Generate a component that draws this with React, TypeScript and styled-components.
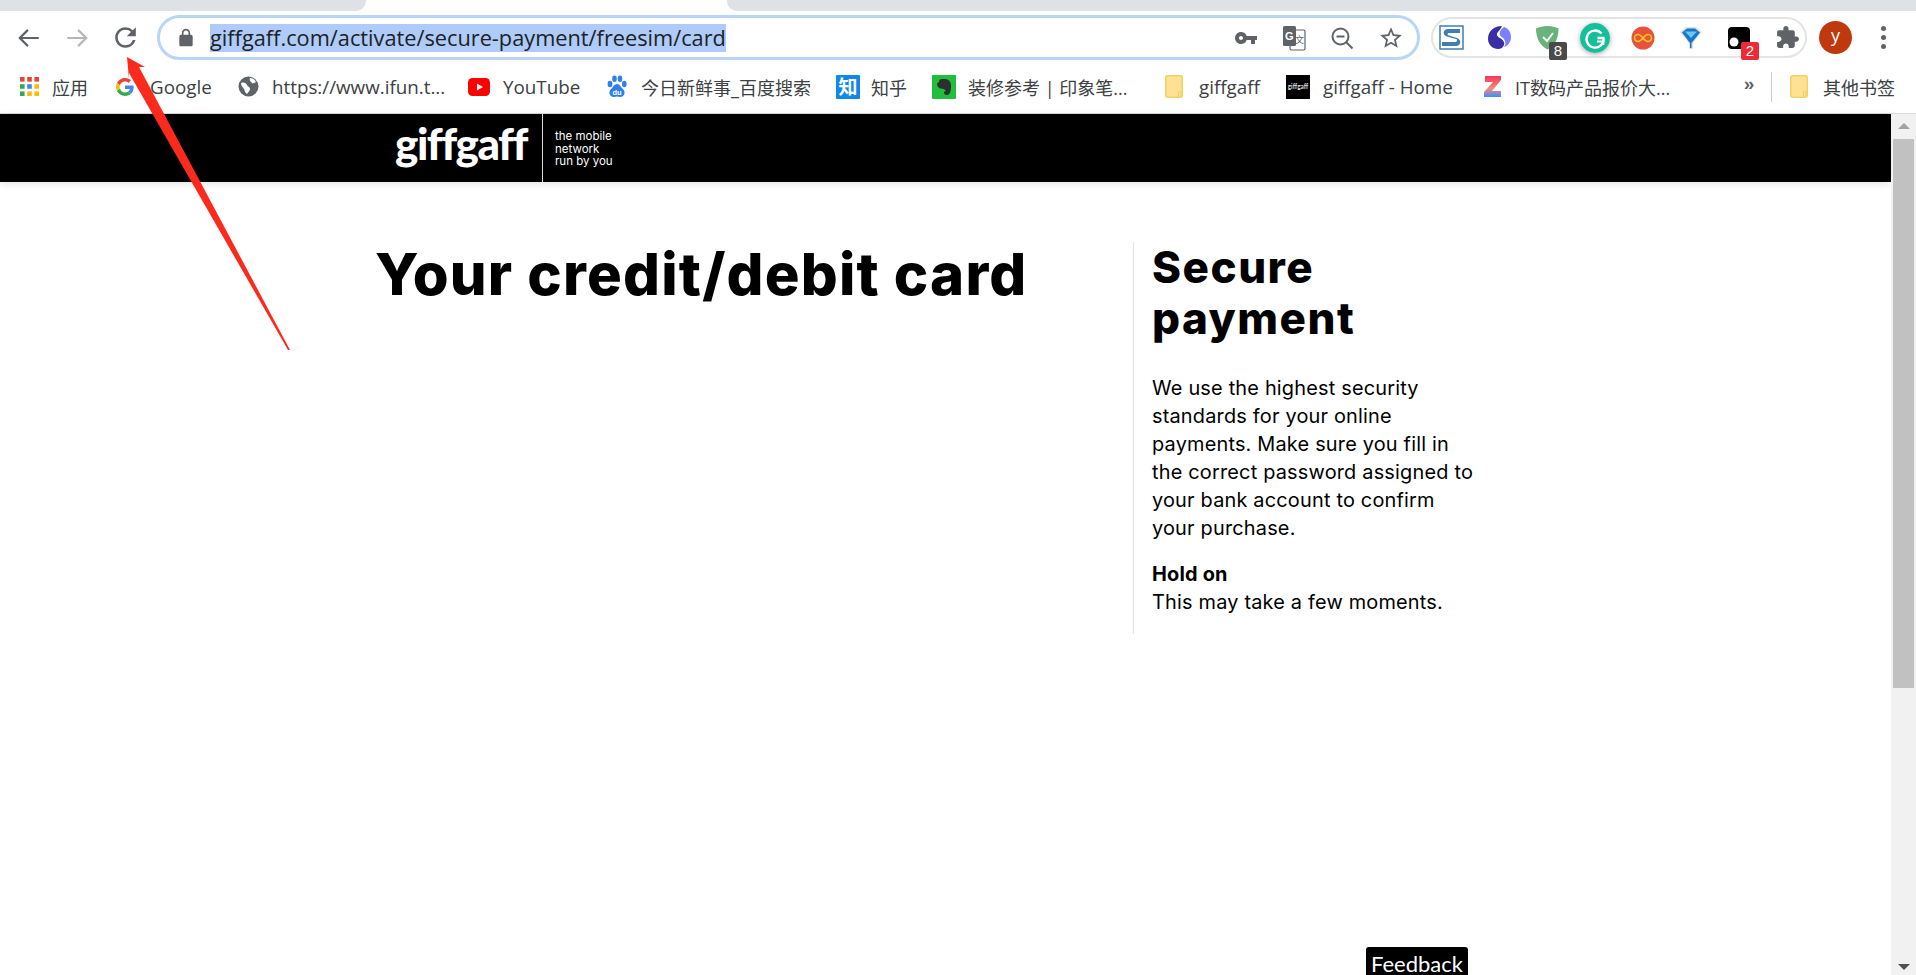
import React from 'react';
import styled, { createGlobalStyle } from 'styled-components';

const GlobalStyle = createGlobalStyle`
  html, body {
    margin: 0;
    padding: 0;
    background: #fff;
    overflow: hidden;
  }
  * {
    box-sizing: border-box;
  }
`;

const uiFont = `'Open Sans', 'Noto Sans CJK SC', sans-serif`;
const pageFont = `Inter, 'Noto Sans', sans-serif`;

const Root = styled.div`
  position: relative;
  width: 1916px;
  height: 975px;
  overflow: hidden;
  display: flex;
  flex-direction: column;
  background: #fff;
`;

const TabStrip = styled.div`
  height: 11px;
  display: flex;
  flex-shrink: 0;
`;
const InactiveTab = styled.div<{ $side: 'left' | 'right' }>`
  background: #dee1e6;
  height: 100%;
  flex: ${(p) => (p.$side === 'left' ? '0 0 366px' : '1')};
  margin-left: ${(p) => (p.$side === 'right' ? '361px' : '0')};
  border-radius: ${(p) => (p.$side === 'left' ? '0 0 10px 0' : '0 0 0 10px')};
`;

const Toolbar = styled.div`
  display: flex;
  align-items: center;
  height: 49px;
  padding: 4px 0 0 5px;
  flex-shrink: 0;
`;
const NavButton = styled.div`
  width: 48px;
  display: flex;
  justify-content: center;
  align-items: center;
`;
const UrlBar = styled.div`
  width: 1263px;
  height: 45px;
  margin-left: 8px;
  border: 3px solid #b9d5f7;
  border-radius: 23px;
  display: flex;
  align-items: center;
  padding: 0 13px 0 16px;
`;
const UrlText = styled.span`
  font-family: ${uiFont};
  font-size: 21.75px;
  line-height: 28px;
  color: #202124;
  background: #aecbfa;
  margin-left: 14px;
  margin-right: auto;
  white-space: nowrap;
`;
const UrlActions = styled.div`
  display: flex;
  align-items: center;
  gap: 24px;
`;
const ExtensionPill = styled.div`
  width: 376px;
  height: 41px;
  margin-left: 11px;
  border: 2px solid #e3e4e6;
  border-radius: 21px;
  display: flex;
  align-items: center;
  gap: 18px;
  padding-left: 3px;
`;
const ExtensionSlot = styled.div<{ $raised?: boolean }>`
  position: relative;
  width: 30px;
  height: 30px;
  display: flex;
  align-items: center;
  justify-content: center;
  border-radius: 50%;
  ${(p) => p.$raised && 'background: #fff; box-shadow: 0 1px 5px rgba(0,0,0,.35);'}
`;
const Badge = styled.span<{ $color: string }>`
  position: absolute;
  right: -5px;
  bottom: -7px;
  width: 18px;
  height: 18px;
  border-radius: 2px;
  background: ${(p) => p.$color};
  color: #fff;
  font: 15px/18px 'Liberation Sans', sans-serif;
  text-align: center;
`;
const Avatar = styled.div`
  width: 33px;
  height: 33px;
  margin-left: 12px;
  border-radius: 50%;
  background: #c0390e;
  color: #fff;
  font: 18px/29px ${uiFont};
  text-align: center;
`;
const MenuDots = styled.div`
  margin-left: 29px;
  display: flex;
  flex-direction: column;
  gap: 4px;
  span {
    width: 5px;
    height: 5px;
    border-radius: 50%;
    background: #5f6368;
  }
`;

const BookmarkBar = styled.div`
  height: 54px;
  display: flex;
  align-items: center;
  padding-left: 20px;
  border-bottom: 1px solid #dadce0;
  flex-shrink: 0;
`;
const Bookmark = styled.div<{ $width: number; $slot: number; $cjk?: boolean }>`
  width: ${(p) => p.$width}px;
  display: grid;
  grid-template-columns: ${(p) => p.$slot}px 1fr;
  align-items: center;
  flex-shrink: 0;
  span {
    font-family: ${uiFont};
    font-size: ${(p) => (p.$cjk ? '18px' : '18.8px')};
    color: #3c4043;
    white-space: nowrap;
  }
`;
const Chevrons = styled.span`
  font: bold 19px 'Liberation Sans', sans-serif;
  color: #5f6368;
  width: 20px;
  text-align: center;
  position: relative;
  top: -3px;
`;
const BarDivider = styled.div`
  width: 1px;
  height: 30px;
  background: #ccc;
  margin: 0 18px 0 12px;
`;

const Viewport = styled.div`
  flex: 1;
  display: flex;
  min-height: 0;
`;
const PageArea = styled.div`
  flex: 1;
  min-width: 0;
`;
const SiteHeader = styled.header`
  height: 68px;
  background: #000;
  color: #fff;
  display: flex;
  padding-left: 395px;
  box-shadow: 0 2px 8px rgba(0, 0, 0, 0.12);
`;
const Logo = styled.div`
  width: 147px;
  font-family: Lato, sans-serif;
  font-weight: 900;
  font-size: 44px;
  letter-spacing: -1.5px;
  line-height: 58px;
`;
const Tagline = styled.div`
  border-left: 1px solid #ddd;
  padding: 16px 0 0 12px;
  font-family: ${pageFont};
  font-size: 11.5px;
  line-height: 12.5px;
`;
const Content = styled.main`
  display: flex;
  padding: 60px 0 0 375px;
`;
const MainColumn = styled.section`
  width: 758px;
`;
const Title = styled.h1`
  margin: 0;
  font-family: ${pageFont};
  font-weight: 800;
  font-size: 58px;
  line-height: 64px;
  letter-spacing: 1.2px;
  color: #000;
`;
const Sidebar = styled.aside`
  width: 360px;
  height: 392px;
  border-left: 1px solid #e2e2e2;
  padding-left: 18px;
  font-family: ${pageFont};
  color: #000;
`;
const SidebarTitle = styled.h2`
  margin: 0 0 30px;
  font-weight: 800;
  font-size: 44px;
  line-height: 51px;
  letter-spacing: 1.5px;
`;
const SidebarText = styled.p`
  margin: 0 0 18px;
  font-size: 19.9px;
  line-height: 28px;
  letter-spacing: 0.2px;
  white-space: nowrap;
`;
const Strong = styled.strong`
  display: block;
  font-weight: 700;
`;

const Scrollbar = styled.div`
  width: 25px;
  background: #f1f1f1;
  display: flex;
  flex-direction: column;
  align-items: center;
  padding-top: 9px;
`;
const ScrollArrow = styled.div<{ $down?: boolean }>`
  width: 0;
  height: 0;
  border-left: 6px solid transparent;
  border-right: 6px solid transparent;
  ${(p) => (p.$down ? 'border-top: 6px solid #505050;' : 'border-bottom: 6px solid #a3a3a3;')}
`;
const ScrollThumb = styled.div`
  width: 21px;
  height: 549px;
  margin: 10px 0 auto;
  background: #c1c1c1;
`;
const ScrollEnd = styled.div`
  height: 5px;
`;

const Feedback = styled.div`
  position: absolute;
  left: 1366px;
  bottom: 0;
  width: 102px;
  height: 28px;
  background: #000;
  color: #fff;
  border-radius: 3px 3px 0 0;
  font: 22px/34px Lato, sans-serif;
  text-align: center;
`;
const Annotation = styled.svg`
  position: absolute;
  left: 0;
  top: 0;
  pointer-events: none;
`;

const grey = '#5f6368';

const Icon: React.FC<{ size?: number; d: string; color?: string }> = ({ size = 24, d, color = grey }) => (
  <svg width={size} height={size} viewBox="0 0 24 24" fill={color}>
    <path d={d} />
  </svg>
);

const Arrow: React.FC<{ flip?: boolean; color: string }> = ({ flip, color }) => (
  <svg width="26" height="26" viewBox="0 0 24 24" fill="none" stroke={color} strokeWidth="2">
    <path d={flip ? 'M3 12h17M13 4.5l7.5 7.5-7.5 7.5' : 'M21 12H4M11 4.5 3.5 12l7.5 7.5'} />
  </svg>
);

const reloadPath =
  'M17.65 6.35A7.958 7.958 0 0 0 12 4c-4.42 0-7.99 3.58-7.99 8s3.57 8 7.99 8c3.73 0 6.84-2.55 7.73-6h-2.08A5.99 5.99 0 0 1 12 18c-3.31 0-6-2.69-6-6s2.69-6 6-6c1.66 0 3.14.69 4.22 1.78L13 11h7V4l-2.35 2.35z';
const lockPath =
  'M18 8h-1V6c0-2.76-2.24-5-5-5S7 3.24 7 6v2H6c-1.1 0-2 .9-2 2v10c0 1.1.9 2 2 2h12c1.1 0 2-.9 2-2V10c0-1.1-.9-2-2-2zM9 8V6c0-1.66 1.34-3 3-3s3 1.34 3 3v2H9z';
const keyPath =
  'M12.65 10A5.99 5.99 0 0 0 7 6c-3.31 0-6 2.69-6 6s2.69 6 6 6a5.99 5.99 0 0 0 5.65-4H17v4h4v-4h2v-4H12.65zM7 14c-1.1 0-2-.9-2-2s.9-2 2-2 2 .9 2 2-.9 2-2 2z';
const starPath =
  'M22 9.24l-7.19-.62L12 2 9.19 8.63 2 9.24l5.46 4.73L5.82 21 12 17.27 18.18 21l-1.63-7.03L22 9.24zM12 15.4l-3.76 2.27 1-4.28-3.32-2.88 4.38-.38L12 6.1l1.71 4.04 4.38.38-3.32 2.88 1 4.28L12 15.4z';
const puzzlePath =
  'M20.5 11H19V7c0-1.1-.9-2-2-2h-4V3.5C13 2.12 11.88 1 10.5 1S8 2.12 8 3.5V5H4c-1.1 0-1.99.9-1.99 2v3.8H3.5c1.49 0 2.7 1.21 2.7 2.7s-1.21 2.7-2.7 2.7H2V20c0 1.1.9 2 2 2h3.8v-1.5c0-1.49 1.21-2.7 2.7-2.7 1.49 0 2.7 1.21 2.7 2.7V22H17c1.1 0 2-.9 2-2v-4h1.5c1.38 0 2.5-1.12 2.5-2.5S21.88 11 20.5 11z';

const TranslateIcon = () => (
  <svg width="24" height="26" viewBox="0 0 24 26">
    <rect x="8" y="5" width="15" height="20" rx="1.5" fill="#fff" stroke={grey} strokeWidth="1.2" />
    <rect x="1" y="1" width="13" height="20" rx="1.5" fill={grey} />
    <text x="3" y="15" fontFamily="Liberation Sans" fontWeight="700" fontSize="11" fill="#fff">G</text>
    <text x="13" y="18" fontFamily="Noto Sans CJK SC" fontSize="9" fill={grey}>文</text>
  </svg>
);
const ZoomOutIcon = () => (
  <svg width="24" height="24" viewBox="0 0 24 24" fill="none" stroke={grey} strokeWidth="2">
    <circle cx="10.5" cy="10.5" r="8" />
    <path d="M6.5 10.5h8M16.5 16.5l6 6" />
  </svg>
);
const StripeS = () => (
  <svg width="25" height="25" viewBox="0 0 25 25">
    <rect x="1" y="1" width="23" height="23" fill="#fff" stroke="#3e7eb5" strokeWidth="1.5" />
    <path d="M21 4H9C4 4 3 10 8 11.5L17 14c2 .7 1 3-1 3H3v4h14c5 0 6-6 1-8L10 10.5C8 10 8.500 8 10 8h11z" fill="#3e7eb5" />
  </svg>
);
const SwirlIcon = () => (
  <svg width="25" height="25" viewBox="0 0 25 25">
    <path d="M15 1C8 1 1 5 1 14c0 6 5 10 10 10 3 0 5-1.500 6-4 1-3-1-5-4-7-3-1.500-4-4-2-6 1-1.500 2.500-2.500 4-6z" fill="#3a2ea5" />
    <path d="M17 2c4 1 7 5 7 10 0 5-3 9-7 10 2-3 2-6-1-9-3-2-4-4-3-6 .5-2 2-3.500 4-5z" fill="#7a80ff" />
  </svg>
);
const ShieldIcon = () => (
  <svg width="25" height="25" viewBox="0 0 25 25">
    <path d="M12.500 1c4 0 8 1 11 2.500 0 9-3 17-11 21C4.500 20.500 1 12.500 1 3.500 4 2 8.500 1 12.500 1z" fill="#68b27b" />
    <path d="M8 12l4 4 6-8" fill="none" stroke="#fff" strokeWidth="2" />
  </svg>
);
const GrammarlyIcon = () => (
  <svg width="30" height="30" viewBox="0 0 30 30">
    <circle cx="15" cy="15" r="15" fill="#15bf99" />
    <path d="M21.500 10.500A8.500 8.500 0 1 0 23.500 15h-6" fill="none" stroke="#fff" strokeWidth="2.400" />
    <path d="M17 18.500h6.500V22" fill="none" stroke="#fff" strokeWidth="1.800" />
  </svg>
);
const InfinityIcon = () => (
  <svg width="24" height="24" viewBox="0 0 24 24">
    <circle cx="12" cy="12" r="11.500" fill="#e8523c" />
    <path d="M12 12c-2-2.500-3-3.500-5-3.500a3.500 3.500 0 0 0 0 7c2 0 3-1 5-3.500s3-3.500 5-3.500a3.500 3.500 0 0 1 0 7c-2 0-3-1-5-3.500z" fill="none" stroke="#f6c21c" strokeWidth="1.700" />
  </svg>
);
const FunnelIcon = () => (
  <svg width="24" height="24" viewBox="0 0 24 24">
    <path d="M1 6 7 1h10l6 5-9 11v6h-4v-6z" fill="#dcdfe3" />
    <path d="M3 6.500 8 2.500h8l5 4-8.500 10.500v5h-1.500v-5z" fill="#1878c8" />
    <path d="M6 5.500h12L12 12z" fill="#6fc5f5" />
  </svg>
);
const BlackBlockIcon = () => (
  <svg width="24" height="24" viewBox="0 0 24 24">
    <rect x="1" y="1" width="22" height="22" rx="4" fill="#000" />
    <circle cx="7" cy="16" r="4.500" fill="#fff" />
  </svg>
);

const AppsGridIcon = () => {
  const colors = ['#ea4335', '#ea4335', '#ea4335', '#34a853', '#4285f4', '#fbbc05', '#34a853', '#fbbc05', '#fbbc05'];
  return (
    <svg width="19" height="19" viewBox="0 0 19 19">
      {colors.map((fill, i) => (
        <rect key={i} x={(i % 3) * 7.2} y={Math.floor(i / 3) * 7.2} width="4.600" height="4.600" fill={fill} />
      ))}
    </svg>
  );
};
const GoogleIcon = () => (
  <svg width="18" height="18" viewBox="0 0 48 48">
    <path fill="#EA4335" d="M24 9.500c3.540 0 6.710 1.220 9.210 3.600l6.850-6.850C35.900 2.380 30.470 0 24 0 14.620 0 6.510 5.380 2.560 13.220l7.980 6.190C12.430 13.720 17.740 9.500 24 9.500z" />
    <path fill="#4285F4" d="M46.980 24.550c0-1.570-.15-3.090-.38-4.550H24v9.020h12.940c-.58 2.960-2.260 5.480-4.780 7.180l7.730 6c4.510-4.180 7.090-10.360 7.090-17.650z" />
    <path fill="#FBBC05" d="M10.530 28.590c-.48-1.450-.76-2.990-.76-4.590s.27-3.140.76-4.590l-7.980-6.190C.92 16.460 0 20.120 0 24c0 3.880.92 7.540 2.560 10.780l7.970-6.190z" />
    <path fill="#34A853" d="M24 48c6.480 0 11.930-2.130 15.890-5.810l-7.730-6c-2.150 1.450-4.920 2.300-8.160 2.300-6.260 0-11.570-4.220-13.470-9.910l-7.980 6.190C6.510 42.620 14.620 48 24 48z" />
  </svg>
);
const GlobeIcon = () => (
  <svg width="21" height="21" viewBox="0 0 21 21">
    <circle cx="10.500" cy="10.500" r="10" fill={grey} />
    <path d="M3 7c3-1 5 0 6 2 1 2 3 2 3 4s-2 3-3 5c-2-1-2-3-3-5S3 10 3 7zM12 2c3 0 5 2 6 4-2 1-3 2-4 1s-3-3-2-5z" fill="#fff" />
  </svg>
);
const YouTubeIcon = () => (
  <svg width="22" height="18" viewBox="0 0 22 18">
    <rect width="22" height="18" rx="4.500" fill="#f00" />
    <path d="M9 5.500v7l6-3.500z" fill="#fff" />
  </svg>
);
const BaiduIcon = () => (
  <svg width="20" height="24" viewBox="0 0 20 24">
    <g fill="#2f80ed">
      <ellipse cx="3" cy="9" rx="2.400" ry="3.200" />
      <ellipse cx="7.500" cy="3.800" rx="2.300" ry="3.300" />
      <ellipse cx="13" cy="3.800" rx="2.300" ry="3.300" />
      <ellipse cx="17.300" cy="9" rx="2.300" ry="3.200" />
      <path d="M10 9c3 0 3.500 3 6 5 3 3 1.500 8-3 8-1 0-2-.5-3-.5s-2 .5-3 .5c-4.500 0-6-5-3-8 2.500-2 3-5 6-5z" />
    </g>
    <text x="5.500" y="20" fontFamily="Liberation Sans" fontWeight="700" fontSize="7.500" fill="#fff">du</text>
  </svg>
);
const ZhihuIcon = () => (
  <svg width="24" height="24" viewBox="0 0 24 24">
    <rect width="24" height="24" rx="1" fill="#0f88eb" />
    <text x="12" y="18.500" textAnchor="middle" fontFamily="Noto Sans CJK SC" fontWeight="700" fontSize="19" fill="#fff">知</text>
  </svg>
);
const EvernoteIcon = () => (
  <svg width="24" height="24" viewBox="0 0 24 24">
    <rect width="24" height="24" rx="1" fill="#1fbf3c" />
    <path d="M7 7c0-2 1-3 3-3h3c4 0 6 3 6 7 0 5-1 9-4 9-2 0-3-1-3-2.500 0-1 1-1.500 2-1-1-3-4-3-6-3-2-1-3-3-3-5l2-1.500z" fill="#2b2f2d" />
  </svg>
);
const FolderIcon = () => (
  <svg width="18" height="23" viewBox="0 0 18 23">
    <rect x="0.750" y="0.750" width="16.500" height="21.500" rx="2" fill="#fde293" stroke="#f5d061" strokeWidth="1.500" />
    <path d="M13.500 22v-4.500a1.200 1.200 0 0 1 2.500 0V22" fill="none" stroke="#f5d061" strokeWidth="1" />
  </svg>
);
const GiffgaffTile = () => (
  <svg width="24" height="24" viewBox="0 0 24 24">
    <rect width="24" height="24" fill="#000" />
    <text x="12" y="14" textAnchor="middle" fontFamily="Lato" fontWeight="700" fontSize="6.500" fill="#ddd">giffgaff</text>
  </svg>
);
const ZolIcon = () => (
  <svg width="18" height="23" viewBox="0 0 18 23">
    <defs>
      <linearGradient id="zol" x1="0" y1="0" x2="0" y2="1">
        <stop offset="0" stopColor="#f5365c" />
        <stop offset="0.600" stopColor="#f58a7a" />
        <stop offset="1" stopColor="#3f8cff" />
      </linearGradient>
    </defs>
    <path d="M1 1h16v4L8 16h9v6H0v-5L9 7H1z" fill="url(#zol)" />
  </svg>
);

type BookmarkItem = {
  label: string;
  icon: React.ReactNode;
  width: number;
  slot: number;
  cjk?: boolean;
};

const bookmarks: BookmarkItem[] = [
  { label: '应用', icon: <AppsGridIcon />, width: 96, slot: 32, cjk: true },
  { label: 'Google', icon: <GoogleIcon />, width: 122, slot: 34 },
  { label: 'https://www.ifun.t...', icon: <GlobeIcon />, width: 230, slot: 34 },
  { label: 'YouTube', icon: <YouTubeIcon />, width: 139, slot: 35 },
  { label: '今日新鲜事_百度搜索', icon: <BaiduIcon />, width: 229, slot: 34, cjk: true },
  { label: '知乎', icon: <ZhihuIcon />, width: 96, slot: 35, cjk: true },
  { label: '装修参考 | 印象笔...', icon: <EvernoteIcon />, width: 233, slot: 36, cjk: true },
  { label: 'giffgaff', icon: <FolderIcon />, width: 121, slot: 34 },
  { label: 'giffgaff - Home', icon: <GiffgaffTile />, width: 198, slot: 37 },
  { label: 'IT数码产品报价大...', icon: <ZolIcon />, width: 255, slot: 31, cjk: true },
];

const App: React.FC = () => (
  <Root>
    <GlobalStyle />
    <TabStrip>
      <InactiveTab $side="left" />
      <InactiveTab $side="right" />
    </TabStrip>
    <Toolbar>
      <NavButton>
        <Arrow color={grey} />
      </NavButton>
      <NavButton>
        <Arrow flip color="#b4b6b9" />
      </NavButton>
      <NavButton>
        <Icon size={31} d={reloadPath} />
      </NavButton>
      <UrlBar>
        <Icon size={20} d={lockPath} />
        <UrlText>giffgaff.com/activate/secure-payment/freesim/card</UrlText>
        <UrlActions>
          <Icon size={24} d={keyPath} />
          <TranslateIcon />
          <ZoomOutIcon />
          <Icon size={26} d={starPath} />
        </UrlActions>
      </UrlBar>
      <ExtensionPill>
        <ExtensionSlot>
          <StripeS />
        </ExtensionSlot>
        <ExtensionSlot>
          <SwirlIcon />
        </ExtensionSlot>
        <ExtensionSlot>
          <ShieldIcon />
          <Badge $color="#4a4a4a">8</Badge>
        </ExtensionSlot>
        <ExtensionSlot $raised>
          <GrammarlyIcon />
        </ExtensionSlot>
        <ExtensionSlot>
          <InfinityIcon />
        </ExtensionSlot>
        <ExtensionSlot>
          <FunnelIcon />
        </ExtensionSlot>
        <ExtensionSlot>
          <BlackBlockIcon />
          <Badge $color="#ee2b35">2</Badge>
        </ExtensionSlot>
        <ExtensionSlot>
          <Icon size={25} d={puzzlePath} />
        </ExtensionSlot>
      </ExtensionPill>
      <Avatar>y</Avatar>
      <MenuDots>
        <span />
        <span />
        <span />
      </MenuDots>
    </Toolbar>
    <BookmarkBar>
      {bookmarks.map((b) => (
        <Bookmark key={b.label} $width={b.width} $slot={b.slot} $cjk={b.cjk}>
          {b.icon}
          <span>{b.label}</span>
        </Bookmark>
      ))}
      <Chevrons>»</Chevrons>
      <BarDivider />
      <Bookmark $width={106} $slot={33} $cjk>
        <FolderIcon />
        <span>其他书签</span>
      </Bookmark>
    </BookmarkBar>
    <Viewport>
      <PageArea>
        <SiteHeader>
          <Logo>giffgaff</Logo>
          <Tagline>
            the mobile
            <br />
            network
            <br />
            run by you
          </Tagline>
        </SiteHeader>
        <Content>
          <MainColumn>
            <Title>Your credit/debit card</Title>
          </MainColumn>
          <Sidebar>
            <SidebarTitle>
              Secure
              <br />
              payment
            </SidebarTitle>
            <SidebarText>
              We use the highest security
              <br />
              standards for your online
              <br />
              payments. Make sure you fill in
              <br />
              the correct password assigned to
              <br />
              your bank account to confirm
              <br />
              your purchase.
            </SidebarText>
            <SidebarText>
              <Strong>Hold on</Strong>
              This may take a few moments.
            </SidebarText>
          </Sidebar>
        </Content>
      </PageArea>
      <Scrollbar>
        <ScrollArrow />
        <ScrollThumb />
        <ScrollArrow $down />
        <ScrollEnd />
      </Scrollbar>
    </Viewport>
    <Feedback>Feedback</Feedback>
    <Annotation width="1916" height="975">
      <polygon points="127,57 145,67 139,67 290,350 288,350 129,73 129,79" fill="#fb2a1c" />
    </Annotation>
  </Root>
);

export default App;
